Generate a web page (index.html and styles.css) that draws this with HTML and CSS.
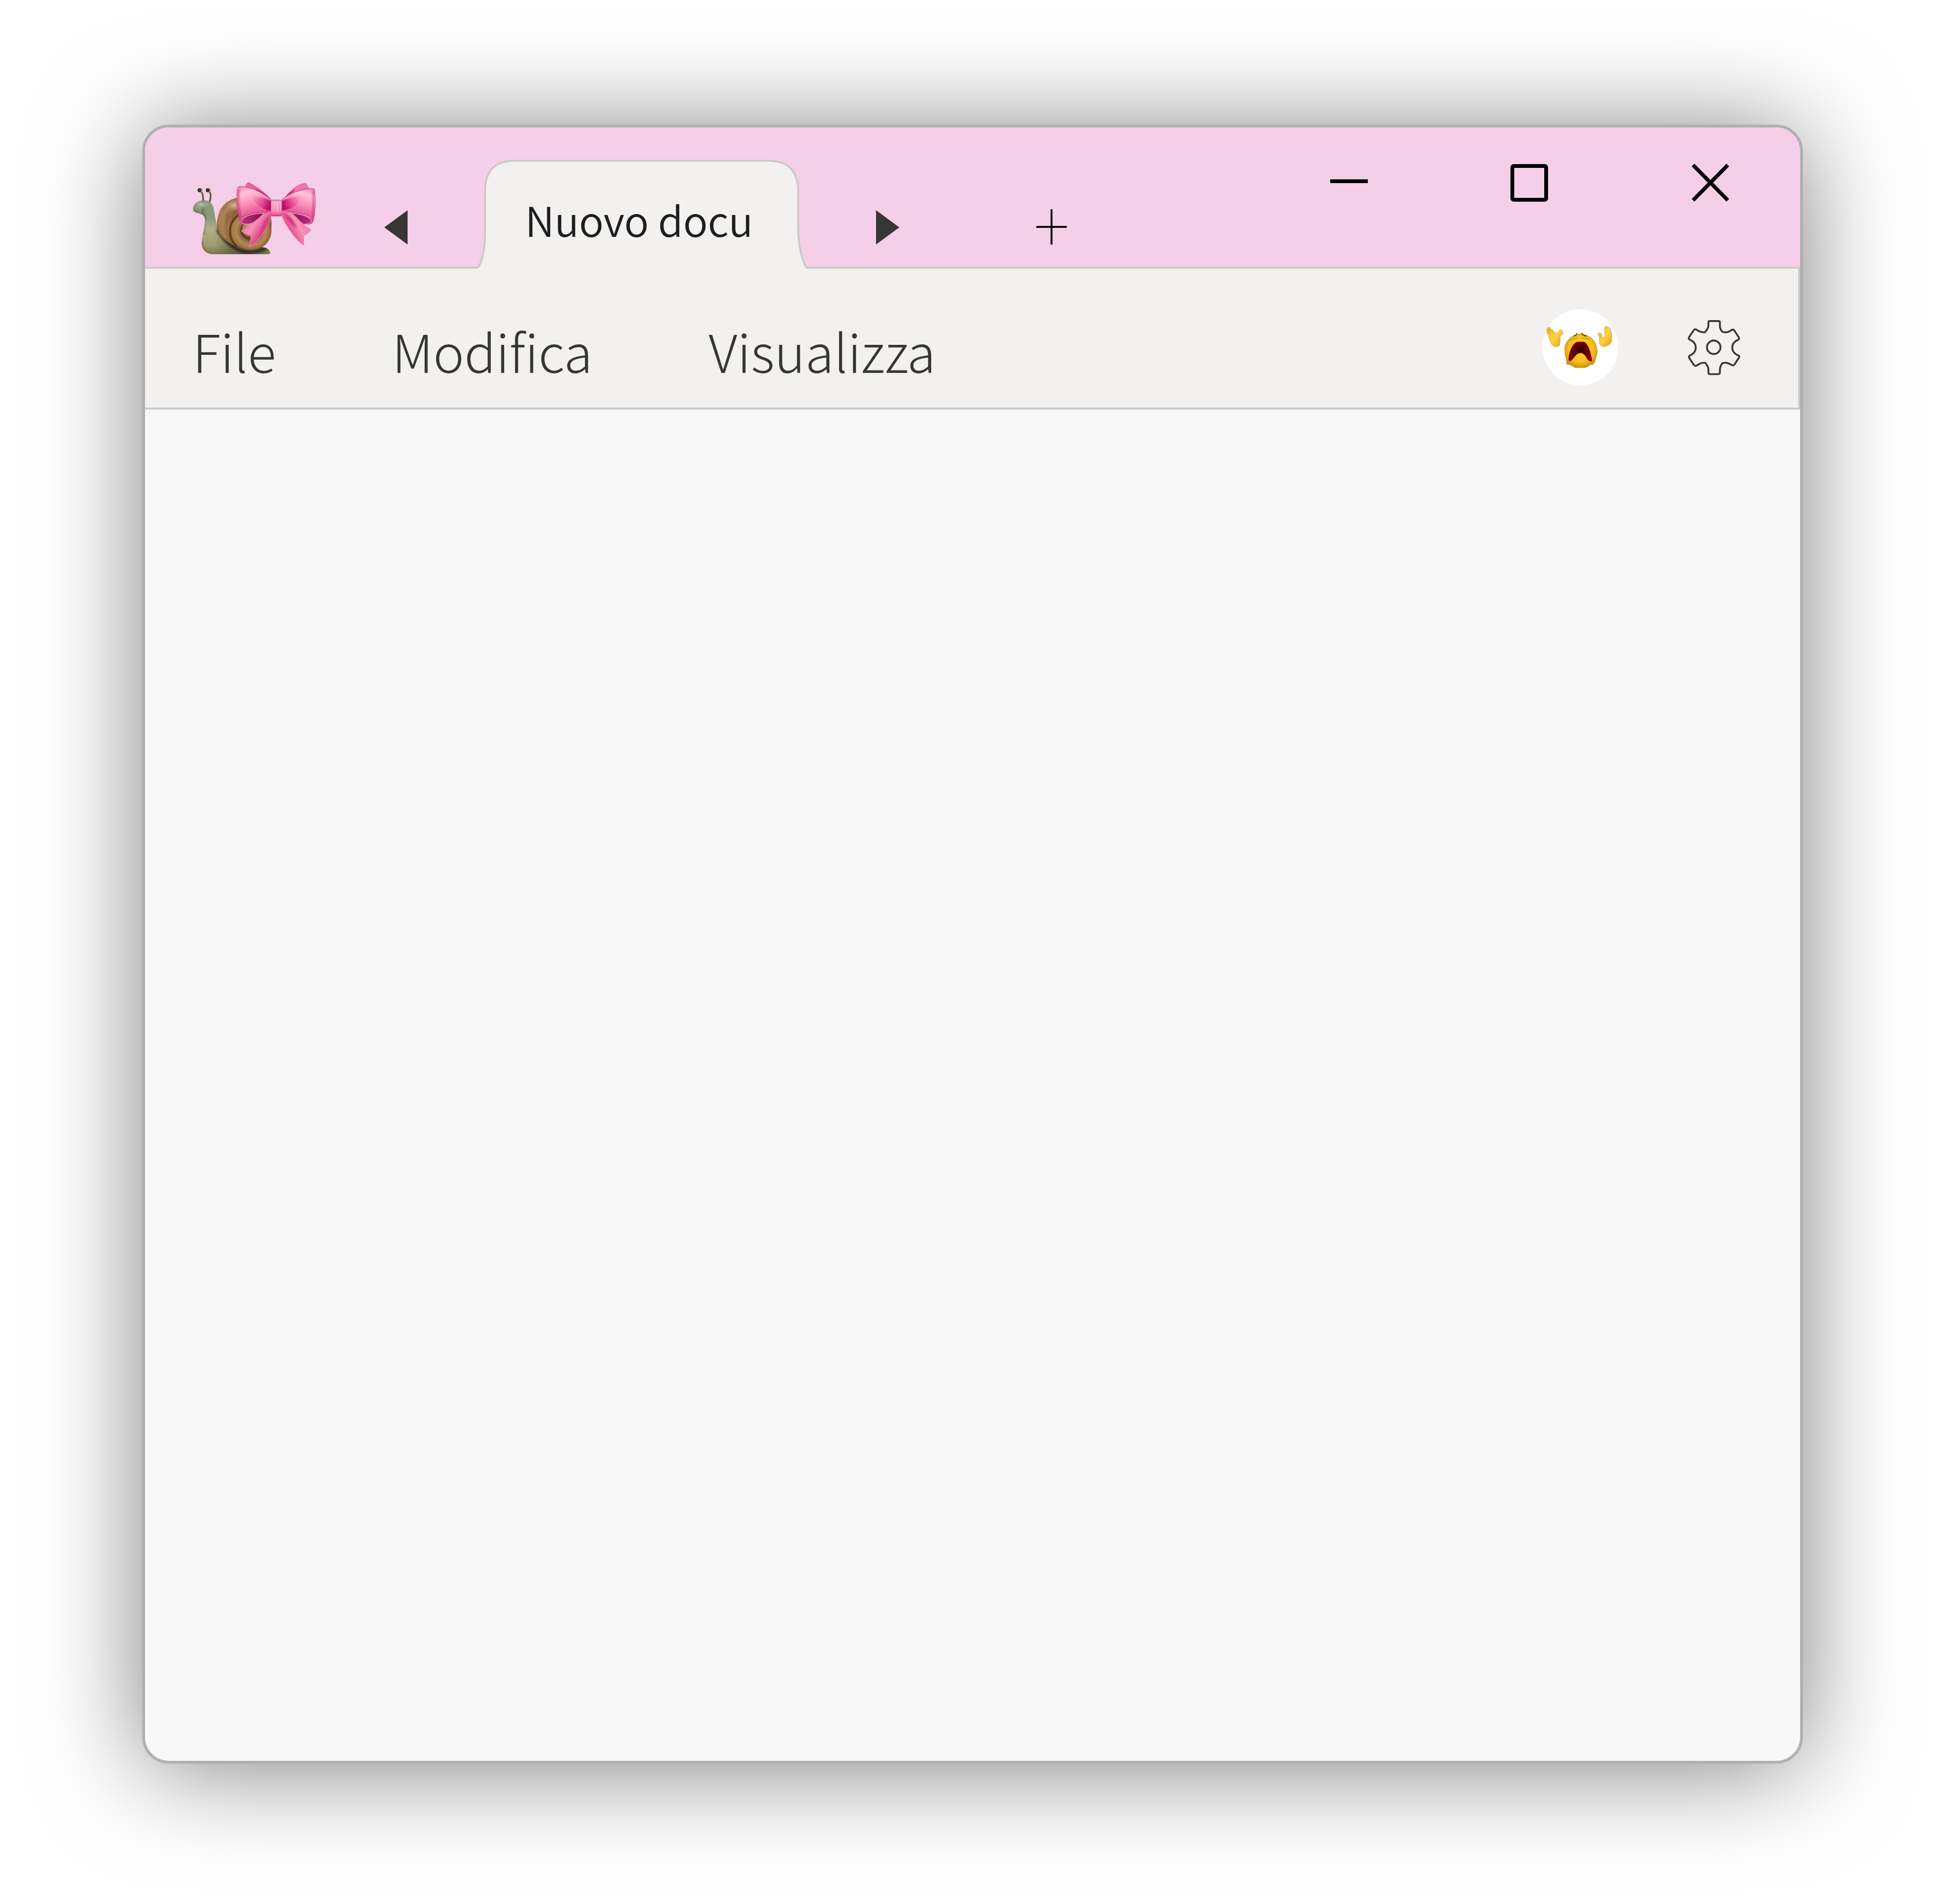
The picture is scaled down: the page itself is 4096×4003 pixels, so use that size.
FILE: index.html
```html
<!DOCTYPE html>
<html lang="it">
<head>
<meta charset="utf-8">
<title>Nuovo documento</title>
<link rel="stylesheet" href="styles.css">
</head>
<body>
<main class="window">
  <header class="titlebar">
    <svg class="logo" viewBox="120 100 880 520" role="img" aria-label="Lumaca con fiocco">
      <defs>
        <linearGradient id="body" x1="0" y1="0" x2="0" y2="1">
          <stop offset="0" stop-color="#8f9a7c"/><stop offset=".3" stop-color="#8a9876"/><stop offset=".55" stop-color="#b0b088"/><stop offset=".82" stop-color="#a09a6c"/><stop offset="1" stop-color="#75744c"/>
        </linearGradient>
        <linearGradient id="foot" x1="0" y1="0" x2="1" y2="0">
          <stop offset="0" stop-color="#58583a" stop-opacity="0"/><stop offset=".5" stop-color="#55553a"/><stop offset="1" stop-color="#7e7c54"/>
        </linearGradient>
        <radialGradient id="head" cx=".5" cy=".45" r=".5">
          <stop offset="0" stop-color="#c2c8b8"/><stop offset="1" stop-color="#8f9a7c" stop-opacity="0"/>
        </radialGradient>
        <linearGradient id="bodyEdge" x1="0" y1="0" x2="1" y2="0">
          <stop offset="0" stop-color="#5c6448" stop-opacity=".6"/><stop offset=".3" stop-color="#5c6448" stop-opacity="0"/><stop offset=".75" stop-color="#5c6448" stop-opacity="0"/><stop offset="1" stop-color="#4c5038" stop-opacity=".4"/>
        </linearGradient>
        <radialGradient id="shell" cx=".48" cy=".42" r=".56">
          <stop offset="0" stop-color="#a87c4e"/><stop offset=".35" stop-color="#8c6038"/><stop offset=".62" stop-color="#b08358"/><stop offset=".85" stop-color="#9a6d42"/><stop offset="1" stop-color="#6f4526"/>
        </radialGradient>
        <radialGradient id="coil" cx=".5" cy=".5" r=".52">
          <stop offset="0" stop-color="#6a4224"/><stop offset=".45" stop-color="#885c36"/><stop offset=".7" stop-color="#b48a58"/><stop offset=".88" stop-color="#a0723f"/><stop offset="1" stop-color="#6a4020"/>
        </radialGradient>
        <radialGradient id="core" cx=".5" cy=".2" r=".8">
          <stop offset="0" stop-color="#cdb184"/><stop offset=".6" stop-color="#a47a4c"/><stop offset="1" stop-color="#6a4020"/>
        </radialGradient>
        <radialGradient id="shine" cx=".5" cy=".5" r=".5">
          <stop offset="0" stop-color="#dac2a2" stop-opacity=".9"/><stop offset="1" stop-color="#b98d62" stop-opacity="0"/>
        </radialGradient>
        <linearGradient id="loopL" x1="0" y1="0" x2=".3" y2="1">
          <stop offset="0" stop-color="#f07aac"/><stop offset=".22" stop-color="#ffc4da"/><stop offset=".5" stop-color="#fb90b8"/><stop offset=".9" stop-color="#dc3f88"/>
        </linearGradient>
        <linearGradient id="loopR" x1="1" y1="0" x2=".7" y2="1">
          <stop offset="0" stop-color="#f07aac"/><stop offset=".22" stop-color="#ffc4da"/><stop offset=".5" stop-color="#fb90b8"/><stop offset=".9" stop-color="#dc3f88"/>
        </linearGradient>
        <linearGradient id="foldL" x1="0" y1="0" x2="1" y2=".3">
          <stop offset=".1" stop-color="#e0589a" stop-opacity=".1"/><stop offset=".6" stop-color="#e23a8a" stop-opacity=".7"/><stop offset="1" stop-color="#c00a68"/>
        </linearGradient>
        <linearGradient id="foldR" x1="1" y1="0" x2="0" y2=".3">
          <stop offset=".1" stop-color="#e0589a" stop-opacity=".1"/><stop offset=".6" stop-color="#e23a8a" stop-opacity=".7"/><stop offset="1" stop-color="#c00a68"/>
        </linearGradient>
        <linearGradient id="hollow" x1="0" y1="0" x2="1" y2="0">
          <stop offset="0" stop-color="#c22c82"/><stop offset="1" stop-color="#7c1250"/>
        </linearGradient>
        <linearGradient id="hollowR" x1="1" y1="0" x2="0" y2="0">
          <stop offset="0" stop-color="#c22c82"/><stop offset="1" stop-color="#7c1250"/>
        </linearGradient>
        <linearGradient id="tailL" x1=".2" y1=".2" x2=".7" y2=".6">
          <stop offset="0" stop-color="#f06aa2"/><stop offset=".45" stop-color="#fc90b8"/><stop offset="1" stop-color="#d8437f"/>
        </linearGradient>
        <linearGradient id="tailR" x1=".8" y1=".2" x2=".2" y2=".6">
          <stop offset="0" stop-color="#f47aaa"/><stop offset=".45" stop-color="#fc90b8"/><stop offset="1" stop-color="#d8437f"/>
        </linearGradient>
        <linearGradient id="knot" x1="0" y1="0" x2="0" y2="1">
          <stop offset="0" stop-color="#f390ba"/><stop offset=".2" stop-color="#ffc2d8"/><stop offset=".7" stop-color="#fb96bc"/><stop offset="1" stop-color="#d03c80"/>
        </linearGradient>
        <filter id="soft" x="-20%" y="-20%" width="140%" height="140%"><feGaussianBlur stdDeviation="7"/></filter>
        <clipPath id="bodyClip"><path d="M123 290C126 256 160 232 206 233C246 236 264 256 272 300L288 390L300 440C330 500 400 560 480 575L620 568C650 570 672 588 674 606Q673 618 660 618H262C215 615 186 585 184 540C186 480 210 430 208 365C205 335 180 330 150 322C130 315 122 310 123 290Z"/></clipPath>
      </defs>
      <path d="M184 174C196 192 194 215 196 240" fill="none" stroke="#5a5a34" stroke-width="12"/>
      <path d="M243 174C254 200 247 222 240 248" fill="none" stroke="#5a5a34" stroke-width="12"/>
      <circle cx="174" cy="161" r="17" fill="#9c9468"/><circle cx="168" cy="161" r="13" fill="#25262a"/><circle cx="169" cy="160" r="5" fill="#50525a"/>
      <circle cx="232" cy="161" r="17" fill="#9c9468"/><circle cx="227" cy="161" r="13" fill="#25262a"/><circle cx="228" cy="160" r="5" fill="#50525a"/>
      <g clip-path="url(#bodyClip)">
        <path d="M100 220H700V630H100Z" fill="url(#body)"/>
        <path d="M184 220H310V480H184Z" fill="url(#bodyEdge)"/>
        <path d="M280 470H680V630H280Z" fill="url(#foot)"/>
        <path d="M184 520C186 590 215 622 280 622H520" fill="none" stroke="#5d5c3a" stroke-width="14" opacity=".7" filter="url(#soft)"/>
        <path d="M124 300C150 330 200 325 212 370" fill="none" stroke="#4f5a3e" stroke-width="14" opacity=".7" filter="url(#soft)"/>
        <ellipse cx="185" cy="268" rx="60" ry="38" fill="url(#head)"/>
        <path d="M300 440C350 530 430 600 520 602C590 600 640 585 650 560" fill="none" stroke="#2c3120" stroke-width="26" filter="url(#soft)"/>
      </g>
      <path d="M440 215C350 232 292 300 294 420C298 480 340 520 420 556C460 580 490 592 535 591C630 590 684 510 684 400C684 290 620 190 440 215Z" fill="url(#shell)"/>
      <path d="M330 300C300 380 320 470 360 500" fill="none" stroke="#c09266" stroke-width="18" opacity=".55" filter="url(#soft)"/>
      <path d="M375 320C345 400 360 480 410 545" fill="none" stroke="#7c5230" stroke-width="16" opacity=".65" filter="url(#soft)"/>
      <ellipse cx="418" cy="270" rx="62" ry="44" fill="url(#shine)"/>
      <ellipse cx="535" cy="452" rx="148" ry="138" fill="url(#coil)"/>
      <path d="M460 332C360 380 370 520 440 562" fill="none" stroke="#5e381c" stroke-width="12"/>
      <path d="M470 342C385 395 390 500 450 556" fill="none" stroke="#b98f60" stroke-width="5" opacity=".7"/>
      <ellipse cx="530" cy="448" rx="70" ry="66" fill="#5e3c20"/>
      <ellipse cx="536" cy="440" rx="64" ry="60" fill="url(#core)"/>
      <path d="M478 450C485 480 510 496 540 496" fill="none" stroke="#8b633a" stroke-width="7"/>
      <g stroke="#cf5a92" stroke-width="3" stroke-linejoin="round">
        <path d="M497 138Q505 104 522 106C580 135 640 180 676 222L640 210L540 150Z" fill="#e8629c"/>
        <path d="M946 150Q940 112 924 112C870 115 820 160 780 215L860 170Z" fill="#f078aa"/>
      </g>
      <path d="M560 150C610 165 645 190 676 224L640 205Z" fill="#bb1b6a"/>
      <path d="M780 215C800 180 830 165 860 152L830 180Z" fill="#cc2c7c"/>
      <path d="M440 150Q445 132 470 134C550 142 630 182 682 232V320C620 318 520 325 480 350C462 370 470 392 490 404Q462 400 456 370C440 300 432 220 440 150Z" fill="url(#loopL)" stroke="#cf3c80" stroke-width="4"/>
      <path d="M992 162Q990 148 965 149C890 152 810 185 756 232V315C820 318 920 330 955 350C975 370 970 392 945 404Q976 406 984 370C998 300 998 220 992 162Z" fill="url(#loopR)" stroke="#cf3c80" stroke-width="4"/>
      <path d="M448 155C440 220 448 300 466 365" fill="none" stroke="#d02c7a" stroke-width="15" opacity=".75" filter="url(#soft)"/>
      <path d="M984 165C988 240 986 310 974 365" fill="none" stroke="#d02c7a" stroke-width="15" opacity=".75" filter="url(#soft)"/>
      <path d="M540 200C600 205 650 220 682 240V308C620 300 570 270 540 200Z" fill="url(#foldL)"/>
      <path d="M900 200C850 205 800 215 758 240V305C820 298 880 270 900 200Z" fill="url(#foldR)"/>
      <path d="M630 324C540 328 470 350 468 385Q472 404 510 403C550 402 590 370 630 324Z" fill="url(#hollow)" stroke="#f28fbd" stroke-width="5"/>
      <path d="M825 326C900 332 966 350 968 382Q960 404 915 403C885 396 850 360 825 326Z" fill="url(#hollowR)" stroke="#f28fbd" stroke-width="5"/>
      <path d="M680 318C630 318 585 370 548 405C520 420 490 430 468 453Q500 480 538 488L528 566C600 520 665 420 680 350Z" fill="url(#tailL)" stroke="#ea82b0" stroke-width="4"/>
      <path d="M758 314C800 312 830 326 848 342C880 375 920 420 966 444Q940 475 914 484V553C850 515 780 400 758 345Z" fill="url(#tailR)" stroke="#ea82b0" stroke-width="4"/>
      <path d="M672 335C655 390 630 440 590 490C625 420 610 390 672 335Z" fill="#cf2077" opacity=".6" filter="url(#soft)"/>
      <path d="M772 325C810 340 850 390 864 430C825 410 795 370 772 325Z" fill="#c41470" opacity=".8" filter="url(#soft)"/>
      <rect x="680" y="231" width="77" height="115" rx="12" fill="url(#knot)" stroke="#cf4680" stroke-width="4"/>
      <path d="M716 258C710 290 714 310 718 322M738 250V318M697 250C692 280 694 310 698 325" fill="none" stroke="#d95c96" stroke-width="6" opacity=".55"/>
    </svg>

    <button class="scroll" type="button" aria-label="Scheda precedente">
      <svg class="arrow" viewBox="0 0 49 72"><path d="M0 36L49 0V72Z"/></svg>
    </button>
    <button class="tab" type="button">
      <svg class="tab-shape" viewBox="0 0 694 229" preserveAspectRatio="none">
        <path class="tab-fill" d="M0 229Q16 204 16 150V65Q16 2 79 2H611Q674 2 674 65V136Q675 200 692 229Z"/>
        <path class="tab-line" d="M1 227Q16 204 16 150V65Q16 2 79 2H611Q674 2 674 65V136Q675 200 692 227"/>
      </svg>
      <span class="tab-label">Nuovo docu</span>
    </button>
    <button class="scroll" type="button" aria-label="Scheda successiva">
      <svg class="arrow" viewBox="0 0 49 72"><path d="M49 36L0 0V72Z"/></svg>
    </button>
    <button class="new-tab" type="button" aria-label="Nuova scheda">
      <svg class="plus" viewBox="0 0 64 74"><path d="M0 37H64M32 0V74"/></svg>
    </button>

    <div class="controls">
      <button class="control" type="button" aria-label="Riduci a icona">
        <svg class="control-icon" viewBox="0 0 80 80"><path d="M1 37H80"/></svg>
      </button>
      <button class="control" type="button" aria-label="Ingrandisci">
        <svg class="control-icon" viewBox="0 0 80 80"><rect x="4" y="5" width="71" height="71" rx="3"/></svg>
      </button>
      <button class="control" type="button" aria-label="Chiudi">
        <svg class="control-icon" viewBox="0 0 80 80"><path d="M4 3L77 77M77 3L4 77"/></svg>
      </button>
    </div>
  </header>

  <nav class="toolbar" aria-label="Menu">
    <button class="menu" type="button">File</button>
    <button class="menu" type="button">Modifica</button>
    <button class="menu" type="button">Visualizza</button>
    <button class="avatar" type="button" aria-label="Profilo">
      <svg class="avatar-art" viewBox="120 87 540 540">
        <defs>
          <radialGradient id="face" cx=".5" cy=".45" r=".55">
            <stop offset="0" stop-color="#ffd83a"/><stop offset=".7" stop-color="#f7bd1c"/><stop offset="1" stop-color="#d4920c"/>
          </radialGradient>
          <linearGradient id="hand" x1="0" y1="0" x2="1" y2="1">
            <stop offset="0" stop-color="#e3aa22"/><stop offset=".5" stop-color="#ffd33e"/><stop offset="1" stop-color="#e0a418"/>
          </linearGradient>
          <radialGradient id="mouth" cx=".5" cy=".45" r=".4">
            <stop offset="0" stop-color="#2c0000"/><stop offset="1" stop-color="#780303"/>
          </radialGradient>
        </defs>
        <path d="M150 235Q155 212 170 215L178 228Q196 230 198 246Q212 250 218 258L234 256Q234 238 250 234Q268 238 266 258Q260 272 246 276Q248 320 242 342Q230 356 208 353Q186 344 178 318Q166 296 166 272Q150 256 150 235Z" fill="url(#hand)" stroke="#c99a40" stroke-width="3"/>
        <path d="M516 268Q520 252 534 256Q544 270 546 292Q562 286 566 268Q560 240 562 220Q570 204 582 210Q606 222 608 246Q616 290 610 318Q592 350 556 354Q530 350 526 326Q524 300 526 286Z" fill="url(#hand)" stroke="#c99a40" stroke-width="3"/>
        <path d="M292 476Q292 452 290 440Q276 400 280 350Q300 290 350 272L390 262L434 272Q490 296 502 345Q512 370 508 408Q496 436 492 462Q484 484 462 480Q440 498 422 502H352Q336 492 318 482Z" fill="url(#face)" stroke="#bd8a28" stroke-width="3"/>
        <path d="M306 450C306 400 330 330 368 318H412C450 330 466 400 474 456Q450 462 436 436C420 405 405 398 388 398C362 400 345 435 324 452Q312 458 306 450Z" fill="url(#mouth)"/>
        <path d="M342 278Q360 276 366 256M432 278Q408 276 398 256" fill="none" stroke="#4d3c26" stroke-width="7"/>
        <path d="M316 308Q345 292 372 294M400 292Q430 290 452 304" fill="none" stroke="#9a8028" stroke-width="5" opacity=".7"/>
      </svg>
    </button>
    <button class="settings" type="button" aria-label="Impostazioni">
      <svg class="gear" viewBox="143 98 372 396">
        <path d="M298 108H362Q371 108 371 117V145Q371 165 389 185Q420 194 442 180Q466 160 474 176L506 225Q511 236 500 242C445 266 445 329 500 352Q511 357 508 366L474 418Q466 430 450 418Q420 398 389 408Q371 430 371 455V474Q371 486 360 486H299Q289 486 289 474V448Q285 425 265 405Q238 402 214 420Q194 434 184 418L152 370Q146 360 158 353C213 330 213 266 158 241Q144 236 152 222L184 174Q193 160 208 172Q235 190 265 188Q285 165 289 145V118Q289 108 298 108Z"/>
        <circle cx="327" cy="295" r="48"/>
      </svg>
    </button>
  </nav>

  <section class="document" aria-label="Documento"></section>
</main>
</body>
</html>
```
FILE: styles.css
```css
* {
  box-sizing: border-box;
}

body {
  margin: 0;
  min-height: 100vh;
  padding: 262px 305px 295px 299px;
  display: flex;
  background: #fff;
  font-family: "Noto Sans CJK JP", "Noto Sans CJK SC", sans-serif;
  font-weight: 300;
}

button {
  margin: 0;
  padding: 0;
  border: 0;
  background: none;
  color: inherit;
  font: inherit;
}

svg {
  display: block;
}

.window {
  flex: 1;
  display: flex;
  flex-direction: column;
  overflow: hidden;
  border: 6px solid #b0b0ae;
  border-radius: 56px;
  background: #f8f8f8;
  box-shadow: 0 10px 220px -6px rgba(0, 0, 0, 0.53);
}

.titlebar {
  display: flex;
  align-items: flex-end;
  height: 297px;
  padding-left: 100px;
  border-bottom: 4px solid #cacac8;
  background: #f5cee7;
}

.logo {
  width: 259px;
  height: 153px;
  margin-bottom: 26px;
}

.scroll,
.new-tab {
  margin-bottom: 47px;
}

.logo + .scroll {
  margin-left: 144px;
}

.arrow {
  width: 49px;
  height: 72px;
  fill: #363634;
}

.tab {
  position: relative;
  width: 694px;
  height: 229px;
  margin: 0 144px -4px 147px;
  color: #1e1e1e;
  font-size: 86px;
  font-weight: 350;
  line-height: 124px;
  text-align: left;
}

.tab-shape {
  position: absolute;
  inset: 0;
  width: 100%;
  height: 100%;
}

.tab-fill {
  fill: #f2f1ef;
}

.tab-line {
  fill: none;
  stroke: #cacac8;
  stroke-width: 4px;
}

.tab-label {
  position: relative;
  display: block;
  padding: 20px 0 0 100px;
}

.new-tab {
  margin-left: 288px;
}

.plus {
  width: 64px;
  height: 74px;
  fill: none;
  stroke: #000;
  stroke-width: 4px;
}

.controls {
  align-self: flex-start;
  display: flex;
  gap: 300px;
  margin-left: auto;
  padding: 76px 149px 0 0;
}

.control-icon {
  width: 80px;
  height: 80px;
  fill: none;
  stroke: #000;
  stroke-width: 8px;
}

.toolbar {
  display: flex;
  align-items: center;
  height: 296px;
  padding: 38px 122px 0 100px;
  border-right: 4px solid #cacac8;
  border-bottom: 4px solid #cacac8;
  background: #f2f1ef;
}

.menu {
  margin-right: 244px;
  padding-top: 12px;
  color: #363634;
  font-size: 110px;
  line-height: 160px;
}

.avatar {
  width: 160px;
  height: 160px;
  margin: 0 146px 0 auto;
  border-radius: 50%;
  background: #fff;
  overflow: hidden;
}

.avatar-art {
  width: 160px;
  height: 160px;
}

.gear {
  width: 110px;
  height: 117px;
  fill: none;
  stroke: #363634;
  stroke-width: 13px;
  stroke-linejoin: round;
}

.document {
  flex: 1;
}
```
